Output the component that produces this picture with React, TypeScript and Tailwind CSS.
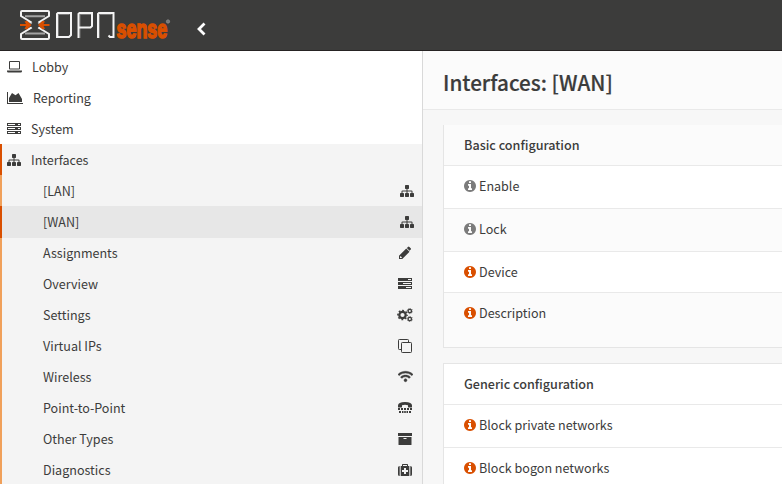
import type { ReactNode } from "react";
import { FaWifi } from "react-icons/fa";

function Sitemap() {
  return (
    <svg width="14" height="14" viewBox="0 0 1792 1792" fill="currentColor">
      <path d="M1792 1248v320q0 40-28 68t-68 28h-320q-40 0-68-28t-28-68v-320q0-40 28-68t68-28h96v-192h-512v192h96q40 0 68 28t28 68v320q0 40-28 68t-68 28h-320q-40 0-68-28t-28-68v-320q0-40 28-68t68-28h96v-192h-512v192h96q40 0 68 28t28 68v320q0 40-28 68t-68 28h-320q-40 0-68-28t-28-68v-320q0-40 28-68t68-28h96v-192q0-52 38-90t90-38h512v-192h-96q-40 0-68-28t-28-68v-320q0-40 28-68t68-28h320q40 0 68 28t28 68v320q0 40-28 68t-68 28h-96v192h512q52 0 90 38t38 90v192h96q40 0 68 28t28 68z" />
    </svg>
  );
}

function Info({ active }: { active?: boolean }) {
  return (
    <svg width="14" height="14" viewBox="128 0 1792 1792" fill="currentColor" className={active ? "text-[#d94f00]" : "text-[#7b7b7b]"}>
      <path d="M1152 1376v-160q0-14-9-23t-23-9h-96v-512q0-14-9-23t-23-9h-320q-14 0-23 9t-9 23v160q0 14 9 23t23 9h96v320h-96q-14 0-23 9t-9 23v160q0 14 9 23t23 9h448q14 0 23-9t9-23zm-128-896v-160q0-14-9-23t-23-9h-192q-14 0-23 9t-9 23v160q0 14 9 23t23 9h192q14 0 23-9t9-23zm640 416q0 209-103 385.5t-279.5 279.5-385.5 103-385.5-103-279.5-279.5-103-385.5 103-385.5 279.5-279.5 385.5-103 385.5 103 279.5 279.5 103 385.5z" />
    </svg>
  );
}

function Laptop() {
  return (
    <svg width="15" height="14" viewBox="0 0 15 14" fill="currentColor">
      <path fillRule="evenodd" d="M3 1h9q1 0 1 1v6.500q0 1-1 1H3q-1 0-1-1V2q0-1 1-1zM3 2v6.500h9V2zM0 10.500h15v.7q0 1.300-1.300 1.300H1.300Q0 12.500 0 11.200z" />
    </svg>
  );
}

function AreaChart() {
  return (
    <svg width="16" height="14" viewBox="0 0 16 14" fill="currentColor">
      <path d="M0 1h1v11h15v1H0zM2 11V7l3-5 3.500 2.200L11.500 2 15 8v3z" />
    </svg>
  );
}

function Server() {
  return (
    <svg width="14" height="14" viewBox="0 0 14 14" fill="currentColor">
      <path fillRule="evenodd" d="M0 1h14v3H0zM1 2v1h7V2zm10 0v1h2V2zM0 5h14v3H0zM1 6v1h7V6zm10 0v1h2V6zM0 9h14v3H0zM1 10v1h7v-1zm10 0v1h2v-1z" />
    </svg>
  );
}

function Tasks() {
  return (
    <svg width="14" height="14" viewBox="0 0 14 14" fill="currentColor">
      <path fillRule="evenodd" d="M0 1h14v3H0zM10 2v1h3V2zM0 5h14v3H0zM5 6v1h8V6zM0 9h14v3H0zM8 10v1h5v-1z" />
    </svg>
  );
}

function Pencil() {
  return (
    <svg width="12" height="14" viewBox="0 0 12 14" fill="currentColor">
      <path fillRule="evenodd" d="M0 9.750 7.250 2.500l3.250 3.250L3.250 13H0zM1 11v1h1.500l.5-.6L1.600 10zM7.800 2 9 .9q.7-.6 1.400 0l1.300 1.300q.7.700 0 1.400l-1.200 1.200z" />
    </svg>
  );
}

function Cogs() {
  return (
    <svg width="16" height="14" viewBox="0 0 16 14" fill="none" stroke="currentColor">
      <circle cx="5.500" cy="7" r="3.200" strokeWidth="2.200" />
      <circle cx="5.500" cy="7" r="4.600" strokeWidth="1.500" strokeDasharray="1.806 1.806" strokeDashoffset=".9" />
      <circle cx="12.800" cy="3" r="1.700" strokeWidth="1.300" />
      <circle cx="12.800" cy="3" r="2.600" strokeWidth=".9" strokeDasharray="1.02 1.02" strokeDashoffset=".5" />
      <circle cx="12.800" cy="11" r="1.700" strokeWidth="1.300" />
      <circle cx="12.800" cy="11" r="2.600" strokeWidth=".9" strokeDasharray="1.02 1.02" strokeDashoffset=".5" />
    </svg>
  );
}

function Clone() {
  return (
    <svg width="14" height="14" viewBox="0 0 14 14" fill="none" stroke="currentColor">
      <rect x="3.500" y="3.500" width="10" height="10" rx=".8" />
      <path d="M3 10.500H1.300Q.5 10.500.5 9.700V1.300Q.5.500 1.300.5h8.400q.8 0 .8.800V3" />
    </svg>
  );
}

function Tty() {
  return (
    <svg width="14" height="14" viewBox="0 0 14 14" fill="currentColor">
      <path d="M0 6V4.500Q0 1 7 1t7 3.500V6q0 .4-.4.400h-3.200Q10 6.400 10 6V4.300q-3-1-6 0V6q0 .4-.4.400H.4Q0 6.400 0 6z" />
      <path d="M0 7h2v2H0zm3 0h2v2H3zm3 0h2v2H6zm3 0h2v2H9zm3 0h2v2h-2zM1 10h2v2H1zm3 0h1.500v2H4zm2.200 0h1.600v2H6.200zm2.300 0H10v2H8.500zm2.500 0h2v2h-2z" />
    </svg>
  );
}

function Archive() {
  return (
    <svg width="14" height="14" viewBox="0 0 14 14" fill="currentColor">
      <path fillRule="evenodd" d="M0 1h14v3H0zM.5 5h13v7.500q0 .5-.5.500H1q-.5 0-.5-.5zM5.500 6v1h3V6z" />
    </svg>
  );
}

function Medkit() {
  return (
    <svg width="14" height="14" viewBox="0 0 14 14" fill="currentColor">
      <path fillRule="evenodd" d="M1.700 3v10Q0 13 0 11.500v-7Q0 3 1.700 3zM2.700 3H4V1.700Q4 1 4.700 1h4.600q.7 0 .7.700V3h1.300v10H2.700zM5 2v1h4V2zm1 3v2H4v2h2v2h2V9h2V7H8V5zM12.300 3Q14 3 14 4.500v7q0 1.500-1.700 1.500z" />
    </svg>
  );
}

function Logo() {
  return (
    <svg width="158" height="36" viewBox="0 0 158 36" fill="none" className="overflow-visible">
      <g stroke="#a3a3a3" strokeWidth="1.900">
        <path d="M5 7.300h20M5 24.500h20M7 12l5 2.500M23 12l-5 2.500M7 21l5-2.500M23 21l-5-2.500" />
      </g>
      <path d="M11.500 13.500 1 7V3q0-1 1-1h26q1 0 1 1v4l-10.500 6.500M11.500 18.500 1 25v4q0 1 1 1h26q1 0 1-1v-4l-10.500-6.500" stroke="#f2f2f2" strokeWidth="2" />
      <path d="M0 15h6L4.500 12.500 7 11.700 11.500 16 7 20.500l-2.500-.8L6 17H0zM29.500 15h-6l1.500-2.500-2.500-.8L18 16l4.500 4.500 2.500-.8-1.500-2.700h6z" fill="#d94f00" />
      <path d="M38.500 27V5.500h11M60 29V5.500h11M79.500 29V5.500h12" stroke="#777" strokeWidth="1" />
      <path d="M38 4h13v22l-2 2H37V5zM58.500 29V5l1-1H72v13l-1.500 1.500H59M78 29V5l1-1h14.500v24H90l-1.500-1.500" stroke="#f4f4f4" strokeWidth="2" />
      <text transform="translate(96.500 28.500) scale(.635 1)" fill="#d94f00" stroke="#d94f00" strokeWidth="1.700" className="font-['Liberation_Sans',sans-serif] text-[26px] font-bold" textLength="80" lengthAdjust="spacingAndGlyphs">sense</text>
      <circle cx="148" cy="12.500" r="1.600" stroke="#8b8b8b" strokeWidth="1" fill="#777" />
    </svg>
  );
}

const subItems: { label: string; icon: ReactNode }[] = [
  { label: "[LAN]", icon: <Sitemap /> },
  { label: "[WAN]", icon: <Sitemap /> },
  { label: "Assignments", icon: <Pencil /> },
  { label: "Overview", icon: <Tasks /> },
  { label: "Settings", icon: <Cogs /> },
  { label: "Virtual IPs", icon: <Clone /> },
  { label: "Wireless", icon: <FaWifi size={15} stroke="currentColor" strokeWidth={18} /> },
  { label: "Point-to-Point", icon: <Tty /> },
  { label: "Other Types", icon: <Archive /> },
  { label: "Diagnostics", icon: <Medkit /> },
];

function MenuRow({ icon, label }: { icon: ReactNode; label: string }) {
  return (
    <div className="flex h-[31px] items-center gap-[10px] pl-[7px]">
      {icon}
      <span>{label}</span>
    </div>
  );
}

function SettingRow({ label, active, className }: { label: string; active?: boolean; className: string }) {
  return (
    <div className={`flex items-start border-b border-[#e9e9e9] pl-5 pt-[10px] ${className}`}>
      <div className="flex h-5 items-center gap-px">
        <Info active={active} />
        <span>{label}</span>
      </div>
    </div>
  );
}

export default function App() {
  return (
    <div className="flex h-[484px] w-[782px] flex-col overflow-hidden whitespace-nowrap bg-[#f7f7f7] font-['Noto_Sans_CJK_SC',sans-serif] text-[12.55px] leading-5 text-[#3c3c3b]">
      <header className="flex h-[51px] shrink-0 items-start border-b border-[#262323] bg-[#3c3c3b] pl-5 pt-[9px]">
        <Logo />
        <svg width="9" height="14" viewBox="0 0 9 14" className="ml-[19px] mt-[12.500px]">
          <path d="M7.500 1.500 2 7l5.500 5.500" fill="none" stroke="#fff" strokeWidth="2.800" />
        </svg>
      </header>
      <div className="flex min-h-0 flex-1">
        <aside className="w-[423px] shrink-0 border-r border-[#d9d9d9] bg-white">
          <div className="h-[93px]">
            <MenuRow icon={<Laptop />} label="Lobby" />
            <MenuRow icon={<AreaChart />} label="Reporting" />
            <MenuRow icon={<Server />} label="System" />
          </div>
          <div className="bg-[#f4f4f4]">
            <div className="flex h-[31px] items-center gap-[10px] border-l-2 border-[#d94f00] pl-[5px]">
              <Sitemap />
              <span>Interfaces</span>
            </div>
            {subItems.map((item, i) => (
              <div
                key={item.label}
                className={`flex items-center justify-between border-l-2 pl-[41px] pr-2 ${i === 1 ? "h-8 border-[#d94f00] bg-[#e7e7e7] pb-px" : i === 2 ? "h-[30px] border-[#f0a05a] pb-px" : "h-[31px] border-[#f0a05a]"}`}
              >
                <span>{item.label}</span>
                {i < 2 ? item.icon : <span className="flex w-[18px] justify-center">{item.icon}</span>}
              </div>
            ))}
          </div>
        </aside>
        <main className="min-w-0 flex-1">
          <div className="flex h-[59px] items-center border-b border-[#e9e9e9] bg-[#fbfbfb] pl-5 pt-1">
            <h1 className="text-[20.7px] font-medium leading-7 [-webkit-text-stroke:0.2px_#3c3c3b]">Interfaces: [WAN]</h1>
          </div>
          <section className="ml-5 mt-[15px] h-[223px] border-b border-l border-[#e5e5e5] bg-white">
            <h2 className="flex h-[41px] items-center border-b border-[#e9e9e9] bg-[#fbfbfb] pl-5 text-[12.6px] font-medium">Basic configuration</h2>
            <SettingRow label="Enable" className="h-[43px] bg-white" />
            <SettingRow label="Lock" className="h-[43px] bg-[#fbfbfb]" />
            <SettingRow label="Device" active className="h-[41px] bg-white" />
            <SettingRow label="Description" active className="h-[54px] border-b-0 bg-[#fbfbfb]" />
          </section>
          <section className="ml-5 mt-[15px] border-l border-t border-[#e5e5e5] bg-white">
            <h2 className="flex h-[41px] items-center border-b border-[#e9e9e9] pl-5 text-[12.6px] font-medium">Generic configuration</h2>
            <SettingRow label="Block private networks" active className="h-[43px] bg-white" />
            <SettingRow label="Block bogon networks" active className="h-[43px] bg-white" />
          </section>
        </main>
      </div>
    </div>
  );
}
